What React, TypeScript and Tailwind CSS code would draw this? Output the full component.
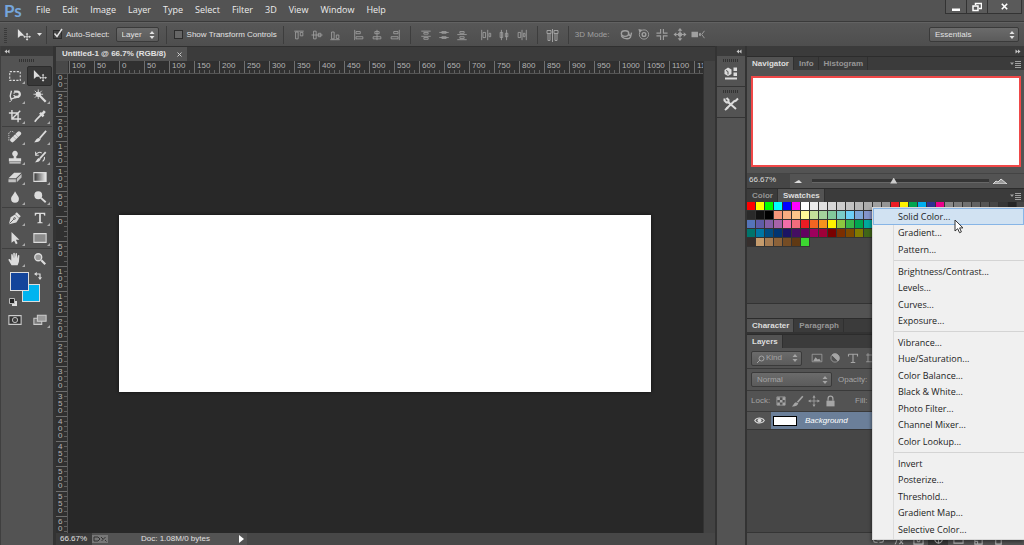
import type { ReactNode } from 'react';
import clsx from 'clsx';

const menus = ['File', 'Edit', 'Image', 'Layer', 'Type', 'Select', 'Filter', '3D', 'View', 'Window', 'Help'];

const adjustmentGroups = [
  ['Solid Color...', 'Gradient...', 'Pattern...'],
  ['Brightness/Contrast...', 'Levels...', 'Curves...', 'Exposure...'],
  ['Vibrance...', 'Hue/Saturation...', 'Color Balance...', 'Black & White...', 'Photo Filter...', 'Channel Mixer...', 'Color Lookup...'],
  ['Invert', 'Posterize...', 'Threshold...', 'Gradient Map...', 'Selective Color...'],
];

const swatchRows = [
  'ff0000 ffff00 00ff00 00ffff 0000ff ff00ff ffffff ebebeb e1e1e1 d7d7d7 cccccc c2c2c2 b7b7b7 acacac a0a0a0 959595 ed1c24 fff200 00a651 00aeef 2e3192 ec008c 898989 7d7d7d 707070 626262 555555 464646 363636 262626',
  '2a2a2a 111111 000000 f69679 f9ad81 fdc689 fff799 c4df9b a3d39c 82ca9c 7accc8 6dcff6 7ea7d8 8393ca',
  '5574b9 605ca8 855fa8 a763a9 f06ea9 f26d7d ed1c24 f26522 f7941d fff200 8dc63f 39b54a 00a651 00a99d',
  '00746b 0076a3 004b80 003471 1b1464 440e62 630460 9e005d 9e0039 790000 7b2e00 7d4900 827b00 406618',
  '362f2d c69c6d a67c52 8c6239 754c24 603913 3cd630',
].map((row) => row.split(' '));

const hMarks = Array.from({ length: 26 }, (_, i) => Math.abs(i * 50 - 100));
// the ruler starts part way through the 300 mark, so only its last digits show
const vMarks = ['00', ...Array.from({ length: 18 }, (_, i) => String(Math.abs(i * 50 - 250)))];

function Icon({ children, className = 'w-4 h-4', box = '0 0 16 16' }: { children: ReactNode; className?: string; box?: string }) {
  return (
    <svg viewBox={box} className={clsx('shrink-0', className)} fill="none" stroke="currentColor" aria-hidden="true">
      {children}
    </svg>
  );
}

const moveIcon = (
  <>
    <path d="M1 1v10.500l3-2.700h4.500z" fill="currentColor" stroke="none" />
    <path d="M11.500 6.500v7M8 10h7" />
    <path d="M10 7.500l1.500-2 1.500 2zM10 12.500l1.500 2 1.500-2zM9 8.500l-2 1.500 2 1.500zM14 8.500l2 1.500-2 1.500z" fill="currentColor" stroke="none" />
  </>
);

const toolGroups: { name: string; active?: boolean; art: ReactNode }[][] = [
  [
    { name: 'Marquee', art: <path d="M2 3h12v10H2z" strokeWidth="1.200" strokeDasharray="2.500 1.500" /> },
    { name: 'Move', active: true, art: moveIcon },
    { name: 'Lasso', art: (
      <>
        <path d="M4 2L2.500 8l1 3.500L8 10l4.500-1" strokeWidth="1.500" />
        <path d="M7 3h3.500a3 3 0 0 1 0 6H7" strokeWidth="2.600" />
        <path d="M3.500 11.500c1.500 1 0 3-2 3M6 4.700h2M6 7.500h2" />
      </>
    ) },
    { name: 'Magic wand', art: (
      <>
        <path d="M7.500 7.500l7 7" strokeWidth="2.600" />
        <path d="M6 .5v11M.5 6h11M2 2l8 8M10 2l-8 8" />
        <circle cx="6" cy="6" r="3" fill="currentColor" stroke="none" />
      </>
    ) },
    { name: 'Crop', art: <path d="M4.500 1v10.500H15M1 4.500h10.500V15M4.500 11.500L14 2" strokeWidth="1.600" /> },
    { name: 'Eyedropper', art: (
      <>
        <path d="M9.500 6.500L4 12l-2 2.500" strokeWidth="2" />
        <path d="M8 4.500l4 4M10.500 6l3-3.500" strokeWidth="3" />
      </>
    ) },
  ],
  [
    { name: 'Healing brush', art: (
      <>
        <path d="M5 11.500L12.500 4" strokeWidth="5" strokeLinecap="round" />
        <path d="M6 7.500l3 3M8.500 5l3 3" stroke="#666" strokeDasharray="1 1" />
        <path d="M1 12V6.500A3.500 3.500 0 0 1 7 3" strokeDasharray="1.500 1" />
      </>
    ) },
    { name: 'Brush', art: (
      <>
        <path d="M15 1L7.500 9.500" strokeWidth="2" />
        <path d="M9 10c-1 3-4 4.500-8 4 2-1 2-4 5-5z" fill="currentColor" stroke="none" />
      </>
    ) },
    { name: 'Clone stamp', art: <path d="M6.500 7a3.200 3.200 0 1 1 3 0v2.500H15V13H1V9.500h5.500zM1.500 14h13v1.500h-13z" fill="currentColor" stroke="none" /> },
    { name: 'History brush', art: (
      <>
        <path d="M14.500 2.500L8 9.500" strokeWidth="2" />
        <path d="M9 10c-1 3-4 4.500-7 4 2-1 2-4 4.500-5z" fill="currentColor" stroke="none" />
        <path d="M3 5.500c2-3 5-3.500 7-2M13 8c.5 2-.5 4-2 5M3 2v4h3.500" strokeWidth="1.200" />
      </>
    ) },
    { name: 'Eraser', art: (
      <>
        <path d="M7 3h8.500L9 9.500H.5z" fill="currentColor" stroke="none" />
        <path d="M.5 10.500H9V14H.5zM10 10l5.500-5.500V8.500L10 14z" fill="currentColor" stroke="none" opacity=".8" />
      </>
    ) },
    { name: 'Gradient', art: (
      <>
        <defs>
          <linearGradient id="ramp"><stop offset="0" stopColor="#333" /><stop offset="1" stopColor="#eee" /></linearGradient>
        </defs>
        <path d="M1 3h14v10H1z" fill="url(#ramp)" strokeWidth="1.200" />
      </>
    ) },
    { name: 'Blur', art: <path d="M8 1.500c2 4 4.500 6 4.500 8.500a4.500 4.500 0 0 1-9 0C3.500 7.500 6.500 5.500 8 1.500z" fill="currentColor" stroke="none" /> },
    { name: 'Dodge', art: (
      <>
        <circle cx="6" cy="6" r="4.500" fill="currentColor" stroke="none" />
        <path d="M9 9l5.500 5" strokeWidth="2.200" />
      </>
    ) },
  ],
  [
    { name: 'Pen', art: (
      <>
        <path d="M1 15l2-8 5-3 4.500 4.500-3 4.500z" fill="currentColor" stroke="none" />
        <path d="M9 2.500l4.500 4.500" strokeWidth="3" />
        <path d="M1.500 14.500L7 9" stroke="#555" />
        <circle cx="7.500" cy="8.500" r="1" stroke="#555" />
      </>
    ) },
    { name: 'Type', art: <path d="M2 2h12v3.500h-1l-1-2H9v9l2 .5v1H5v-1l2-.5v-9H4l-1 2H2z" fill="currentColor" stroke="none" /> },
    { name: 'Path selection', art: <path d="M4 1v12.500l3-2.500 2 4 2-1-2-4h4z" fill="currentColor" stroke="none" /> },
    { name: 'Rectangle', art: <path d="M1 3h14v10H1z" fill="#8a8a8a" strokeWidth="1.200" /> },
  ],
  [
    { name: 'Hand', art: <path d="M4 15l-3.500-6c0-1.500 2-1.200 3.200 1V3c0-1 1.500-1 1.700 0l.6 4V1.500c0-1 1.800-1 1.800 0V7l.8-5c.2-1 1.700-1 1.700 0v5.500l1-3.500c.3-1 1.700-.8 1.700.2L12.500 11 11 15z" fill="currentColor" stroke="none" /> },
    { name: 'Zoom', art: (
      <>
        <circle cx="6" cy="6" r="4" fill="#999" strokeWidth="1.500" />
        <path d="M9.500 9.500L14 14" strokeWidth="2.500" />
      </>
    ) },
  ],
];

const alignGroups = [
  [
    'M1 2.500h11M2.500 3.500h3v8h-3zM8 4h3v4h-3z',
    'M0 7h13M2.500 2.500h3v9h-3zM8 5h3v4h-3z',
    'M1 12.500h11M2.500 3.500h3v8h-3zM8 7h3v4h-3z',
  ],
  [
    'M1.500 1v12M3 3h5v2.500h-5zM3 9h8v2.500h-8z',
    'M6.500 1v12M4 3h5v2.500h-5zM2 9h9v2.500h-9z',
    'M11.500 1v12M5 3h5v2.500h-5zM2 9h8v2.500h-8z',
  ],
  [
    'M1 2.500h11M4 4h5v2h-5zM1 8.500h11M4 10h5v2h-5z',
    'M1 4h11M4 3h5v2h-5zM1 10h11M4 9h5v2h-5z',
    'M4 3h5v2h-5zM1 6.500h11M4 9h5v2h-5zM1 12.500h11',
  ],
  [
    'M1.500 1v12M3 4h3v6h-3zM8.500 1v12M10 5h2v4h-2z',
    'M3.500 1v12M2 4h3v6h-3zM9.500 1v12M8 5h3v4h-3z',
    'M6.500 1v12M2 4h3v6h-3zM11.500 1v12M8 5h2v4h-2z',
  ],
];

const orbitIcons = [
  <><ellipse cx="6" cy="6" rx="4" ry="3" strokeWidth="1.500" /><path d="M2 8c1 4 9 5 10 1M9 6l3 3 1-4" strokeWidth="1.500" /></>,
  <><circle cx="7" cy="7" r="5" /><circle cx="7" cy="7" r="2" strokeWidth="1.500" /><path d="M1 1l4 1-3 3z" fill="currentColor" stroke="none" /></>,
  <><path d="M5.500 1v4.500H1M8.500 1v4.500H13M5.500 13V8.500H1M8.500 13V8.500H13" strokeWidth="1.200" /></>,
  <><path d="M7 0l2.500 3h-5zM7 14l2.500-3h-5zM0 7l3-2.500v5zM14 7l-3-2.500v5z" fill="currentColor" stroke="none" /><path d="M7 2v10M2 7h10" /><circle cx="7" cy="7" r="2" fill="currentColor" /></>,
  <><path d="M0 4h7v6H0zM8 6l2-1v4l-2-1z" fill="currentColor" stroke="none" /><path d="M14 3l-3 4 3 4" /></>,
];

const layerActions = [
  { name: 'Link layers', d: 'M5 4H3a2 2 0 0 0 0 5h2M7 4h2a2 2 0 0 1 0 5H7M4 6.500h4' },
  { name: 'Layer style', d: 'M2 11c2 0 2-8 4-8M2 6h4M7 6l4 5M11 6l-4 5' },
  { name: 'Add mask', d: 'M1 3h10v8H1zM6 5.500a1.500 1.500 0 1 0 .1 0' },
  { name: 'New adjustment layer', d: 'M6 2a4 4 0 1 0 .1 0M6 2v8' },
  { name: 'New group', d: 'M1 3h4l1 1h5v6H1z' },
  { name: 'New layer', d: 'M2 3h8v8H2zM2 8h3v3' },
  { name: 'Delete layer', d: 'M1 3.500h10M3 4v7h6V4M5 2h2' },
];

function UpDown() {
  return (
    <Icon box="0 0 6 8" className="w-[6px] h-2 pointer-events-none absolute right-[3px] top-1/2 -translate-y-1/2">
      <path d="M3 0l2.500 3h-5zM3 8l2.500-3h-5z" fill="currentColor" stroke="none" />
    </Icon>
  );
}

function Dropdown({ label, value, className, pad = 'pl-[5px]' }: { label: string; value: string; className?: string; pad?: string }) {
  return (
    <div className={clsx('relative rounded-[2px] border border-[#3a3a3a] bg-linear-to-b from-[#6b6b6b] to-[#5b5b5b] h-[15px]', className)}>
      <select aria-label={label} className={clsx('block appearance-none w-full h-full bg-transparent outline-none leading-3', pad)}>
        <option>{value}</option>
      </select>
      <UpDown />
    </div>
  );
}

function Divider({ className }: { className?: string }) {
  return <div className={clsx('w-px h-[18px] bg-[#3d3d3d] shrink-0', className)} />;
}

function Grip({ className }: { className?: string }) {
  return <div className={clsx('w-4 h-[3px] bg-[repeating-linear-gradient(90deg,#333_0_1px,transparent_1px_2px)]', className)} />;
}

function Chevrons({ right = false }: { right?: boolean }) {
  return (
    <Icon box="0 0 6 6" className={clsx('w-[6px] h-[5px] text-[#c8c8c8]', right && 'rotate-180')}>
      <path d="M3 .5v5L0 3zM6 .5v5L3 3z" fill="currentColor" stroke="none" />
    </Icon>
  );
}

function PanelTabs({ tabs, active, menu = false }: { tabs: string[]; active: string; menu?: boolean }) {
  return (
    <div className="h-[14px] shrink-0 flex items-stretch bg-[#3b3b3b] border-t border-[#2c2c2c] font-bold">
      {tabs.map((tab) => (
        <button key={tab} className={clsx('pl-[5px] pr-1 leading-3 border-r border-[#303030]', tab === active ? 'bg-[#535353] text-[#dedede]' : 'text-[#969696]')}>
          {tab}
        </button>
      ))}
      {menu && (
        <button aria-label="Panel menu" className="ml-auto mr-[3px] text-[#a0a0a0]">
          <Icon box="0 0 11 8" className="w-[11px] h-2">
            <path d="M0 2.500h4L2 5zM5 1h6v1H5zM5 3h6v1H5zM5 5h6v1H5zM5 7h6v1H5z" fill="currentColor" stroke="none" />
          </Icon>
        </button>
      )}
    </div>
  );
}

function MenuBar() {
  return (
    <header className="h-[22px] shrink-0 flex items-start border-b border-[#3a3a3a]">
      <div className="w-9 pl-1 text-[17px] leading-[21px] font-bold text-[#75a5db] font-['Lato',sans-serif]">Ps</div>
      <nav className="flex gap-3 text-[9px] leading-5 text-[#ececec] font-['Open_Sans',sans-serif]">
        {menus.map((m) => <button key={m}>{m}</button>)}
      </nav>
      <div className="ml-auto mr-[2px] flex h-[14px] border border-t-0 border-[#333] bg-[#5a5a5a] text-white divide-x divide-[#333]">
        <button aria-label="Minimize" className="w-[21px] flex justify-center items-center">
          <Icon box="0 0 10 10" className="w-[10px] h-[10px]"><path d="M1 6.500h8V9H1z" fill="currentColor" stroke="none" /></Icon>
        </button>
        <button aria-label="Restore" className="w-[21px] flex justify-center items-center">
          <Icon box="0 0 10 10" className="w-[10px] h-[10px]"><path d="M3.500 3V1.500h6v5H7M1 4h5v4.500H1z" strokeWidth="1.500" /></Icon>
        </button>
        <button aria-label="Close" className="w-[33px] flex justify-center items-center">
          <Icon box="0 0 10 10" className="w-[9px] h-[9px]"><path d="M2 2l6 6M8 2L2 8" strokeWidth="1.800" /></Icon>
        </button>
      </div>
    </header>
  );
}

function OptionsBar() {
  return (
    <div className="h-6 shrink-0 flex items-center border-t border-[#626262] bg-linear-to-b from-[#575757] to-[#4e4e4e] text-[#e2e2e2]">
      <div className="ml-1 mr-[10px] w-[3px] h-4 bg-[repeating-linear-gradient(0deg,#3a3a3a_0_1px,transparent_1px_2px)]" />
      <Icon className="w-[14px] h-[14px]">{moveIcon}</Icon>
      <Icon box="0 0 5 3" className="w-[5px] h-[3px] ml-[6px] mr-1"><path d="M0 0h5L2.500 3z" fill="currentColor" stroke="none" /></Icon>
      <Divider />
      <label className="ml-[6px] flex items-center gap-1">
        <span className="relative flex">
          <input type="checkbox" defaultChecked className="peer appearance-none w-[9px] h-[9px] bg-[#444] border border-[#2c2c2c]" />
          <Icon box="0 0 10 10" className="w-[10px] h-[10px] absolute left-0 bottom-px opacity-0 peer-checked:opacity-100">
            <path d="M1.500 5.500l2.500 3 5-7.500" strokeWidth="1.500" />
          </Icon>
        </span>
        Auto-Select:
      </label>
      <Dropdown label="Auto-select target" value="Layer" className="w-[43px] ml-[6px]" />
      <Divider className="ml-[7px]" />
      <label className="ml-[7px] flex items-center gap-1">
        <input type="checkbox" className="appearance-none w-[9px] h-[9px] bg-[#666] border border-[#2c2c2c]" />
        <span className="whitespace-nowrap">Show Transform Controls</span>
      </label>
      <Divider className="ml-[6px]" />
      <div className="flex items-center text-[#a0a0a0]">
        {alignGroups.map((group, g) => (
          <div key={g} className="flex items-center">
            <div className={clsx('flex gap-[6px]', g % 2 === 1 ? 'ml-3' : 'ml-[9px]')}>
              {group.map((d) => (
                <button key={d} aria-label="Align layers" className="flex">
                  <Icon box="0 0 13 14" className="w-3 h-3">
                    <path d={d} />
                  </Icon>
                </button>
              ))}
            </div>
            {g % 2 === 1 && <Divider className="ml-[9px]" />}
          </div>
        ))}
        <button aria-label="Auto-align" className="ml-2 mr-[9px] flex">
          <Icon box="0 0 13 14" className="w-[13px] h-[14px]"><path d="M1 2.500h4v3H1zM2 6v6.500h2V6M6.500 1v13M8 2.500h4v3H8zM9 6v6.500h2V6" /></Icon>
        </button>
        <Divider />
        <span className="ml-[6px] w-[44px] whitespace-nowrap">3D Mode:</span>
        <div className="flex gap-1">
          {orbitIcons.map((art, i) => (
            <button key={i} aria-label="3D mode tool" className="flex"><Icon box="0 0 14 14" className="w-[14px] h-[13px]">{art}</Icon></button>
          ))}
        </div>
      </div>
      <Dropdown label="Workspace" value="Essentials" className="w-[90px] ml-auto mr-[5px]" />
    </div>
  );
}

function Toolbar() {
  return (
    <aside className="w-[53px] shrink-0 bg-[#535353] border-l border-[#3f3f3f] flex flex-col">
      <div className="h-[10px] bg-[#3b3b3b] flex items-center pl-[3px]"><Chevrons /></div>
      <Grip className="mx-auto mt-[3px] mb-1" />
      <div className="divide-y divide-[#3f3f3f] mx-px">
        {toolGroups.map((group, g) => (
          <div key={g} className="grid grid-cols-2">
            {group.map((tool) => (
              <button
                key={tool.name}
                aria-label={tool.name}
                className={clsx('relative h-5 flex items-center justify-center text-[#dcdcdc] rounded-xs', tool.active && 'bg-[#383838] border border-[#2c2c2c]')}
              >
                <Icon className="w-[14px] h-[14px]">{tool.art}</Icon>
                {tool.name !== 'Zoom' && !tool.active && (
                  <span className="absolute right-[2px] bottom-[2px] border-l-[3px] border-l-transparent border-b-[3px] border-b-[#aaa]" />
                )}
              </button>
            ))}
          </div>
        ))}
      </div>
      <div className="relative h-[34px] mt-[3px] ml-[9px] w-8">
        <button aria-label="Background color" className="absolute left-3 top-3 w-[18px] h-[18px] bg-[#00b4f0] border border-[#ddd]" />
        <button aria-label="Foreground color" className="absolute left-0 top-0 w-[19px] h-[19px] bg-[#14459b] border border-[#ddd]" />
        <Icon box="0 0 10 10" className="w-2 h-2 absolute left-6 top-0 text-[#ddd]">
          <path d="M3 2.500h4.500V7" strokeWidth="1.500" />
          <path d="M3.500 0v5L0 2.500zM5 6.500h5L7.500 10z" fill="currentColor" stroke="none" />
        </Icon>
        <Icon box="0 0 8 8" className="w-2 h-2 absolute -left-px bottom-0">
          <path d="M3 3h5v5H3z" fill="#ddd" stroke="none" />
          <path d="M.5 .5h5v5h-5z" fill="#222" stroke="#bbb" />
        </Icon>
      </div>
      <div className="grid grid-cols-2 mx-px mt-1 text-[#ccc]">
        <button aria-label="Quick mask" className="flex justify-center h-5 items-center">
          <Icon className="w-[14px] h-[14px]"><path d="M1 3h14v10H1z" fill="#333" strokeWidth="1.200" /><circle cx="8" cy="8" r="3" fill="#444" /></Icon>
        </button>
        <button aria-label="Screen mode" className="relative flex justify-center h-5 items-center">
          <Icon className="w-[14px] h-[14px]"><path d="M1 6h9v7H1z" fill="#777" strokeWidth="1.200" /><path d="M5 2.500h10v7H5z" fill="#999" strokeWidth="1.200" /></Icon>
          <span className="absolute right-[2px] bottom-[2px] border-l-[3px] border-l-transparent border-b-[3px] border-b-[#aaa]" />
        </button>
      </div>
    </aside>
  );
}

function DocumentWindow() {
  return (
    <main className="flex-1 min-w-0 flex flex-col border-x-[3px] border-r-2 border-[#333] bg-[#3b3b3b]">
      <div className="h-[15px] shrink-0 flex border-t border-[#303030]">
        <div className="flex items-center justify-between pl-[6px] pr-[5px] w-[131px] bg-[#535353] font-bold text-[#e2e2e2]">
          <span className="whitespace-nowrap">Untitled-1 @ 66.7% (RGB/8)</span>
          <button aria-label="Close document" className="text-[#ccc]">
            <Icon box="0 0 5 5" className="w-[5px] h-[5px]"><path d="M.5 .5l4 4M4.500 .5l-4 4" /></Icon>
          </button>
        </div>
      </div>
      <div className="flex-1 min-h-0 flex">
        <div className="flex-1 min-w-0 flex flex-col">
          <div className="h-[13px] shrink-0 flex bg-[#303030] border-b border-[#555] text-[#b4b4b4]">
            <div className="w-3 shrink-0 bg-[#484848] mr-px" />
            <div className="flex flex-1 min-w-0 overflow-hidden">
              {hMarks.map((n, i) => (
                <div key={i} className="w-[25px] h-3 shrink-0 border-l border-[#6e6e6e] pl-[2px] leading-[9px] bg-[repeating-linear-gradient(90deg,transparent_0_4px,#606060_4px_5px)] bg-[length:100%_3px] bg-bottom bg-no-repeat">
                  {n}
                </div>
              ))}
            </div>
          </div>
          <div className="flex-1 min-h-0 flex">
            <div className="w-3 shrink-0 overflow-hidden bg-[#303030] border-r border-[#555] text-[#b4b4b4]">
              {vMarks.map((mark, i) => (
                <div
                  key={i}
                  className={clsx(
                    'flex flex-col pl-[2px] bg-[repeating-linear-gradient(180deg,transparent_0_4px,#606060_4px_5px)] bg-[length:3px_100%] bg-right bg-no-repeat',
                    i === 0 ? 'h-[17px]' : 'h-[25px] border-t border-[#6e6e6e] pt-px',
                  )}
                >
                  {mark.split('').map((digit, d) => <span key={d} className="h-[7px] shrink-0 leading-[7px]">{digit}</span>)}
                </div>
              ))}
            </div>
            <div className="flex-1 min-w-0 bg-[#282828] overflow-hidden">
              <div className="ml-[51px] mt-[141px] w-[532px] h-[177px] bg-white shadow-[0_0_3px_#111]" />
            </div>
          </div>
        </div>
        <div className="w-3 shrink-0 bg-[#434343] border-l border-[#333]" />
      </div>
      <footer className="h-3 shrink-0 flex items-center bg-[#474747] text-[#e0e0e0]">
        <div className="w-9 h-full bg-[#3b3b3b] pl-1 leading-3">66.67%</div>
        <div className="w-[155px] h-full flex items-center bg-[#535353]">
          <Icon box="0 0 16 8" className="w-4 h-2 text-[#9a9a9a]">
            <path d="M0 0h16v8H0z" fill="#777" stroke="none" />
            <path d="M2 2h4l2 2-2 2H2zM9 2l2 2M13 5l1.500 1.500M9.500 6l4-4" stroke="#333" />
          </Icon>
          <span className="ml-[33px] whitespace-nowrap leading-3">Doc: 1.08M/0 bytes</span>
          <button aria-label="Status options" className="ml-auto mr-[3px]">
            <Icon box="0 0 5 8" className="w-[5px] h-2"><path d="M0 0l5 4-5 4z" fill="#fff" stroke="none" /></Icon>
          </button>
        </div>
      </footer>
    </main>
  );
}

function CollapsedDock() {
  return (
    <aside className="w-[30px] shrink-0 flex flex-col bg-[#535353] border-r-2 border-[#333] text-[#dcdcdc]">
      <div className="h-[10px] bg-[#3b3b3b] flex justify-end items-center pr-[3px]"><Chevrons /></div>
      <div className="h-[31px] flex flex-col items-center gap-[3px] pt-[3px] border-b border-[#353535]">
        <Grip />
        <button aria-label="Properties">
          <Icon>
            <path d="M1.500 5l3.500-2.500L8.500 4.500v4.500L5 11 1.500 9z" fill="currentColor" stroke="none" />
            <path d="M5 6.500v3M3 5.500l2 1" stroke="#555" />
            <path d="M10.500 2.500H14V6h-3.500zM10.500 7.500H14V11h-3.500zM2 12.500h12v2H2z" fill="currentColor" stroke="none" />
          </Icon>
        </button>
      </div>
      <div className="h-[31px] flex flex-col items-center gap-[3px] pt-[3px] border-b border-[#353535]">
        <Grip />
        <button aria-label="Tool presets">
          <Icon>
            <path d="M4.500 5.500L13 13M12 4.500L3.500 12.500" strokeWidth="2" />
            <path d="M1.500 2.500v2l2 2h2V4l-2-2M12 5.500l3-3M2 14l3-2.500" strokeWidth="2" />
          </Icon>
        </button>
      </div>
    </aside>
  );
}

function Panels() {
  return (
    <aside className="w-[277px] shrink-0 flex flex-col bg-[#535353] text-[#ddd]">
      <div className="h-[10px] shrink-0 bg-[#3b3b3b] flex justify-end items-center pr-[3px]"><Chevrons right /></div>

      <PanelTabs tabs={['Navigator', 'Info', 'Histogram']} active="Navigator" menu />
      <div className="h-[103px] shrink-0 px-1 pt-[6px] pr-[3px]">
        <div className="h-[91px] border-2 border-[#f04848] bg-white" />
      </div>
      <div className="h-[15px] shrink-0 flex items-center border-t border-[#444]">
        <div className="w-[43px] h-full bg-[#464646] leading-3 pl-[2px]">66.67%</div>
        <Icon box="0 0 8 4" className="w-2 h-1 ml-1 mr-[10px]"><path d="M0 4l3-2 2-1 3 3z" fill="currentColor" stroke="none" /></Icon>
        <div className="relative flex-1 h-3 flex items-center">
          <input type="range" aria-label="Zoom" defaultValue="46" className="appearance-none w-full h-1 bg-[#353535] border-b border-[#666] [&::-webkit-slider-thumb]:appearance-none [&::-webkit-slider-thumb]:w-[7px] [&::-webkit-slider-thumb]:h-[6px] [&::-webkit-slider-thumb]:bg-[#ccc] [&::-webkit-slider-thumb]:[clip-path:polygon(50%_0,100%_100%,0_100%)]" />
        </div>
        <Icon box="0 0 14 6" className="w-[14px] h-[6px] ml-1 mr-[17px]"><path d="M0 6l3-3 2 1 3-3 6 5z" fill="#999" /></Icon>
      </div>

      <PanelTabs tabs={['Color', 'Swatches']} active="Swatches" menu />
      <div className="h-[101px] shrink-0 bg-[#464646] overflow-hidden">
        {swatchRows.map((row, r) => (
          <div key={r} className="flex">
            {row.map((hex, i) => (
              <button key={i} aria-label={`#${hex}`} className="w-[9px] h-[9px] shrink-0 border-r border-b border-[#333]" style={{ backgroundColor: `#${hex}` }} />
            ))}
          </div>
        ))}
      </div>
      <div className="h-[15px] shrink-0 border-t border-[#333]" />

      <PanelTabs tabs={['Character', 'Paragraph']} active="Character" />
      <div className="h-[2px] shrink-0 bg-[#333]" />
      <PanelTabs tabs={['Layers']} active="Layers" />

      <div className="h-[21px] shrink-0 flex items-center pl-1 border-b border-[#3a3a3a] text-[#a5a5a5]">
        <div className="relative">
          <Dropdown label="Filter kind" value="Kind" className="w-[51px]" pad="pl-[14px]" />
          <Icon box="0 0 8 8" className="w-2 h-2 absolute left-[6px] top-1"><circle cx="4.500" cy="3.500" r="2.500" /><path d="M3 5L0 8" /></Icon>
        </div>
        <div className="flex items-center gap-[6px] ml-[9px] whitespace-nowrap">
          <Icon className="w-3 h-3"><path d="M1.500 3h13v10h-13z" /><path d="M3 12l3-5 3 3 2-1 2 3z" fill="currentColor" stroke="none" /></Icon>
          <Icon className="w-3 h-3"><circle cx="8" cy="8" r="5.500" /><path d="M4 4a5.500 5.500 0 0 1 8 8z" fill="currentColor" /></Icon>
          <Icon className="w-3 h-3"><path d="M2 3h12v3M2 3v3M8 3v11M5 14h6" strokeWidth="1.500" /></Icon>
          <Icon className="w-3 h-3"><path d="M4 4h9v9H4zM1.500 4H4M4 1.500V4M1.500 13H4" /></Icon>
        </div>
      </div>
      <div className="h-[22px] shrink-0 flex items-center pl-1 border-b border-[#3a3a3a] text-[#a5a5a5]">
        <Dropdown label="Blend mode" value="Normal" className="w-[81px]" />
        <span className="ml-[6px]">Opacity:</span>
      </div>
      <div className="h-[21px] shrink-0 flex items-center pl-1 border-b border-[#3a3a3a] text-[#a5a5a5]">
        <span className="w-6">Lock:</span>
        <div className="flex items-center gap-1">
          <Icon className="w-3 h-3"><path d="M2.500 2.500h11v11h-11z" /><path d="M3 3h3.500v3.500H3zM10 3h3.500v3.500H10zM6.500 6.500H10V10H6.500zM3 10h3.500v3.500H3zM10 10h3.500v3.500H10z" fill="currentColor" stroke="none" /></Icon>
          <Icon className="w-[13px] h-[13px]"><path d="M14.500 1.500L8 9" strokeWidth="2" /><path d="M9 10c-1 3-4 4.500-8 4 2-1 2.500-4 5-5z" fill="currentColor" stroke="none" /></Icon>
          <Icon className="w-3 h-3"><path d="M8 3v10M3 8h10" /><path d="M8 0l2 3.500H6zM8 16l2-3.500H6zM0 8l3.500-2v4zM16 8l-3.500-2v4z" fill="currentColor" stroke="none" /></Icon>
          <Icon className="w-[13px] h-[13px]"><path d="M5 7V4.500a3 3 0 0 1 6 0V7" strokeWidth="1.500" /><path d="M3 7h10v7H3z" fill="currentColor" stroke="none" /></Icon>
        </div>
        <span className="ml-[18px]">Fill:</span>
      </div>

      <div className="flex-1 min-h-0 bg-[#464646]">
        <div className="h-[18px] flex border-b border-[#353535]">
          <button aria-label="Layer visibility" className="w-6 flex items-center justify-center bg-[#535353]">
            <Icon className="w-[11px] h-[11px]"><path d="M1 8c3-5 11-5 14 0-3 5-11 5-14 0z" strokeWidth="1.500" /><circle cx="8" cy="8" r="2.500" fill="currentColor" /></Icon>
          </button>
          <div className="flex-1 flex items-center bg-[#6b7f99]">
            <div className="ml-[2px] w-6 h-[10px] bg-white border border-black" />
            <span className="ml-2 italic text-white">Background</span>
          </div>
        </div>
      </div>
      <div className="h-[13px] shrink-0 flex items-end justify-end pr-4 border-t border-[#353535] text-[#b8b8b8]">
        {layerActions.map((action, i) => (
          <button key={action.name} aria-label={action.name} className={clsx('w-5 flex justify-center', i === 3 && 'bg-[#383838]')}>
            <Icon box="0 0 12 12" className="w-[11px] h-[11px]"><path d={action.d} strokeWidth="1.200" /></Icon>
          </button>
        ))}
      </div>
    </aside>
  );
}

function AdjustmentMenu() {
  return (
    <div role="menu" className="absolute right-0 top-[207px] w-[152px] pb-px border border-[#d8d8d8] border-r-0 bg-[#f0f0f0] text-[#1c1c1c] text-[9px] font-['Open_Sans',sans-serif] shadow-[-1px_2px_3px_#0006]">
      <div className="absolute left-5 inset-y-0 border-l border-[#dcdcdc]" />
      {adjustmentGroups.map((group, g) => (
        <div key={g}>
          {g > 0 && <div className="h-[5px] flex items-center pl-[21px]"><div className="h-px flex-1 bg-[#d4d4d4]" /></div>}
          <div>
            {group.map((item, i) => (
              <button
                key={item}
                role="menuitem"
                className={clsx(
                  'relative flex items-center w-full pl-[25px] pr-2 whitespace-nowrap odd:h-[17px] even:h-[16px]',
                  g === 0 && i === 0 && 'bg-[#d1e2f2] outline outline-[#87b5e6] -outline-offset-1',
                )}
              >
                {item}
              </button>
            ))}
          </div>
        </div>
      ))}
      <Icon box="0 0 10 15" className="absolute left-[81px] top-[11px] w-[10px] h-[15px]">
        <path d="M1 1v11l2.700-2.300 1.800 4 1.900-.8-1.800-4H9z" fill="#fff" stroke="#333" />
      </Icon>
    </div>
  );
}

export default function App() {
  return (
    <div className="relative h-screen flex flex-col overflow-hidden bg-[#535353] text-[8px] leading-3 font-['Liberation_Sans',Arial,sans-serif] select-none">
      <MenuBar />
      <OptionsBar />
      <div className="flex-1 min-h-0 flex">
        <Toolbar />
        <DocumentWindow />
        <CollapsedDock />
        <Panels />
      </div>
      <AdjustmentMenu />
    </div>
  );
}
